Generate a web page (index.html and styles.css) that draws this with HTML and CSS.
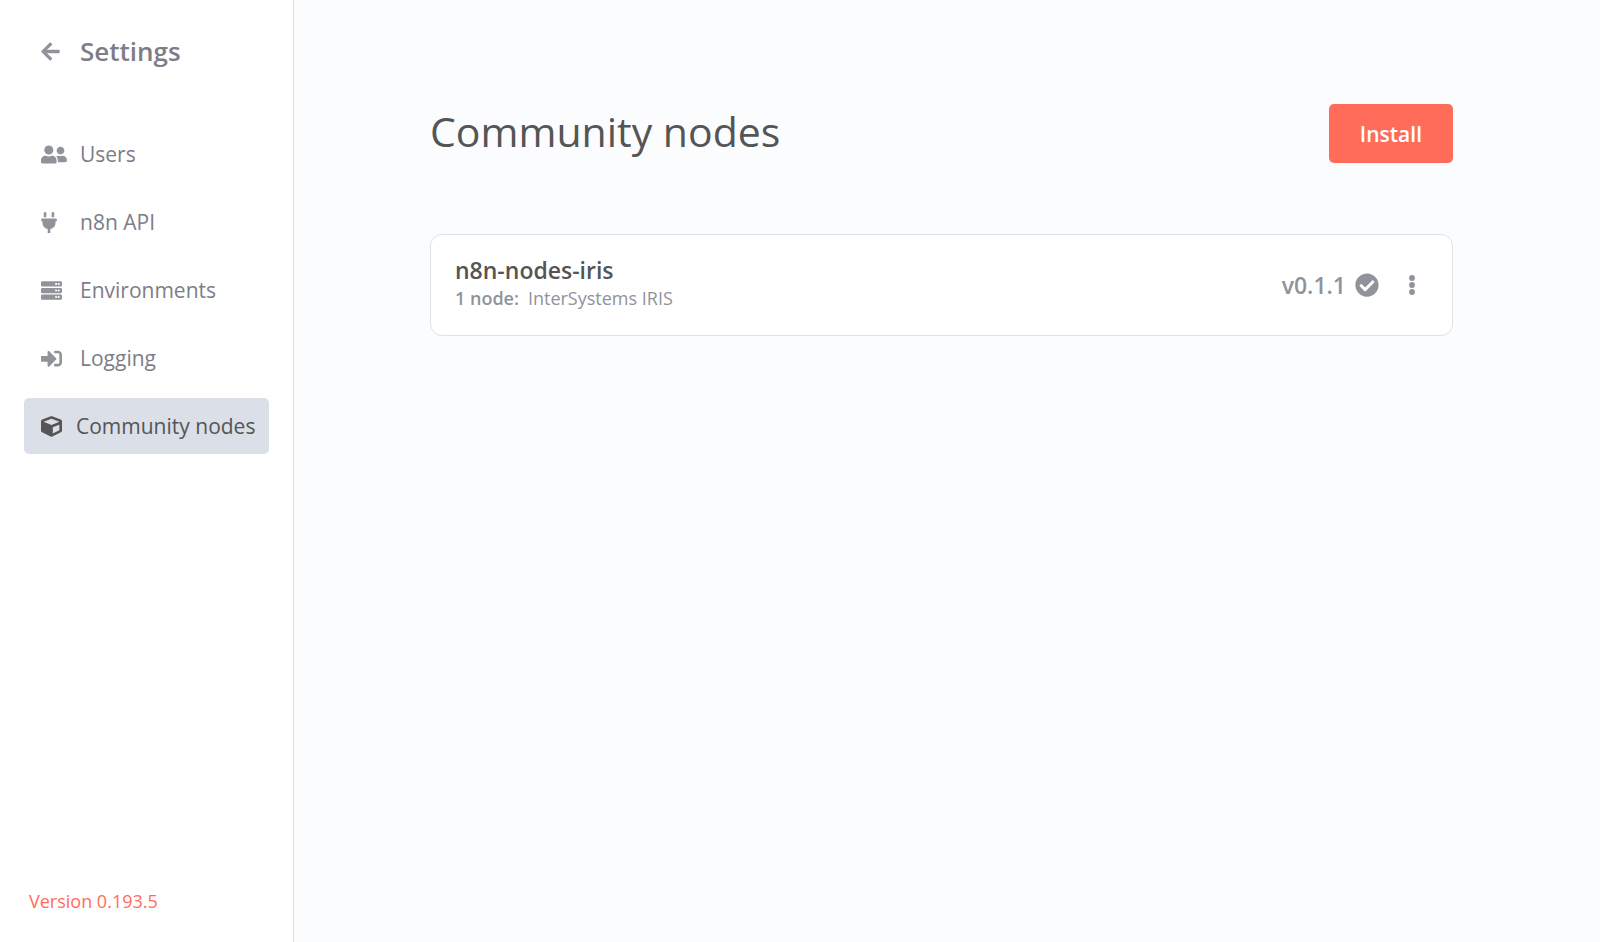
FILE: index.html
```html
<!DOCTYPE html>
<html lang="en">
<head>
    <meta charset="UTF-8">
    <meta name="viewport" content="width=device-width, initial-scale=1.0">
    <title>Settings - Community nodes</title>
    <link rel="stylesheet" href="styles.css">
</head>
<body>
    <div class="layout">
        <aside class="sidebar">
            <a href="#" class="sidebar-header">
                <span class="icon-box">
                    <svg class="icon icon-back" viewBox="0 0 448 512"><path d="M257.500 445.100l-22.200 22.200c-9.400 9.400-24.600 9.400-33.900 0L7 273c-9.400-9.400-9.400-24.600 0-33.900L201.400 44.700c9.400-9.400 24.600-9.400 33.900 0l22.200 22.200c9.500 9.500 9.300 25-.4 34.300L136.600 216H424c13.300 0 24 10.700 24 24v32c0 13.300-10.700 24-24 24H136.600l120.500 114.800c9.800 9.300 10 24.800.4 34.300z"/></svg>
                </span>
                <span class="sidebar-title">Settings</span>
            </a>

            <nav class="menu">
                <a href="#" class="menu-item">
                    <span class="icon-box">
                        <svg class="icon icon-users" viewBox="0 0 640 512"><path d="M192 256c61.900 0 112-50.100 112-112S253.900 32 192 32 80 82.100 80 144s50.100 112 112 112zm76.800 32h-8.300c-20.800 10-43.900 16-68.500 16s-47.600-6-68.500-16h-8.300C51.600 288 0 339.600 0 403.200V432c0 26.500 21.500 48 48 48h288c26.500 0 48-21.500 48-48v-28.800c0-63.600-51.600-115.200-115.200-115.200zM480 256c53 0 96-43 96-96s-43-96-96-96-96 43-96 96 43 96 96 96zm48 32h-3.800c-13.900 4.800-28.600 8-44.200 8s-30.300-3.200-44.200-8H432c-20.400 0-39.200 5.900-55.700 15.400 24.400 26.300 39.700 61.200 39.700 99.800v38.400c0 2.200-.5 4.300-.6 6.400H592c26.500 0 48-21.500 48-48 0-61.900-50.100-112-112-112z"/></svg>
                    </span>
                    <span>Users</span>
                </a>
                <a href="#" class="menu-item">
                    <span class="icon-box">
                        <svg class="icon icon-plug" viewBox="0 0 384 512"><path d="M320,32a32,32,0,0,0-64,0v96h64Zm48,128H16A16,16,0,0,0,0,176v32a16,16,0,0,0,16,16H32v32A160.070,160.070,0,0,0,160,412.800V512h64V412.800A160.070,160.070,0,0,0,352,256V224h16a16,16,0,0,0,16-16V176A16,16,0,0,0,368,160ZM128,32a32,32,0,0,0-64,0v96h64Z"/></svg>
                    </span>
                    <span>n8n API</span>
                </a>
                <a href="#" class="menu-item">
                    <span class="icon-box">
                        <svg class="icon" viewBox="0 0 512 512">
                            <path d="M480 160H32c-17.673 0-32-14.327-32-32V64c0-17.673 14.327-32 32-32h448c17.673 0 32 14.327 32 32v64c0 17.673-14.327 32-32 32zm-48-88c-13.255 0-24 10.745-24 24s10.745 24 24 24 24-10.745 24-24-10.745-24-24-24zm-64 0c-13.255 0-24 10.745-24 24s10.745 24 24 24 24-10.745 24-24-10.745-24-24-24z"/>
                            <path d="M480 320H32c-17.673 0-32-14.327-32-32v-64c0-17.673 14.327-32 32-32h448c17.673 0 32 14.327 32 32v64c0 17.673-14.327 32-32 32zm-48-88c-13.255 0-24 10.745-24 24s10.745 24 24 24 24-10.745 24-24-10.745-24-24-24zm-64 0c-13.255 0-24 10.745-24 24s10.745 24 24 24 24-10.745 24-24-10.745-24-24-24z"/>
                            <path d="M480 480H32c-17.673 0-32-14.327-32-32v-64c0-17.673 14.327-32 32-32h448c17.673 0 32 14.327 32 32v64c0 17.673-14.327 32-32 32zm-48-88c-13.255 0-24 10.745-24 24s10.745 24 24 24 24-10.745 24-24-10.745-24-24-24zm-64 0c-13.255 0-24 10.745-24 24s10.745 24 24 24 24-10.745 24-24-10.745-24-24-24z"/>
                        </svg>
                    </span>
                    <span>Environments</span>
                </a>
                <a href="#" class="menu-item">
                    <span class="icon-box">
                        <svg class="icon" viewBox="0 0 512 512"><path d="M416 448h-84c-6.600 0-12-5.400-12-12v-40c0-6.600 5.400-12 12-12h84c17.700 0 32-14.300 32-32V160c0-17.700-14.300-32-32-32h-84c-6.600 0-12-5.400-12-12V76c0-6.600 5.400-12 12-12h84c53 0 96 43 96 96v192c0 53-43 96-96 96zm-47-201L201 79c-15-15-41-4.500-41 17v96H24c-13.300 0-24 10.700-24 24v96c0 13.300 10.700 24 24 24h136v96c0 21.500 26 32 41 17l168-168c9.300-9.400 9.300-24.600 0-34z"/></svg>
                    </span>
                    <span>Logging</span>
                </a>
                <a href="#" class="menu-item active">
                    <span class="icon-box">
                        <svg class="icon" viewBox="0 0 512 512"><path d="M239.100 6.300l-208 78c-18.700 7-31.100 25-31.100 45v225.100c0 18.200 10.300 34.800 26.500 42.900l208 104c13.500 6.800 29.400 6.800 42.900 0l208-104c16.300-8.100 26.500-24.800 26.500-42.900V129.300c0-20-12.400-37.900-31.100-44.900l-208-78C262 2.200 250 2.200 239.100 6.300zM256 68.400l192 72v1.100l-192 78-192-78v-1.100l192-72zm32 356V275.500l160-65v133.900l-160 80z"/></svg>
                    </span>
                    <span>Community nodes</span>
                </a>
            </nav>

            <a href="#" class="version">Version 0.193.5</a>
        </aside>

        <main class="content">
            <div class="page-header">
                <h1>Community nodes</h1>
                <button type="button" class="install-button">Install</button>
            </div>

            <div class="package-card">
                <div class="package-info">
                    <h2 class="package-name">n8n-nodes-iris</h2>
                    <p class="package-nodes"><strong>1 node:</strong> <span>InterSystems IRIS</span></p>
                </div>
                <div class="package-status">
                    <span class="package-version">v0.1.1</span>
                    <svg class="icon icon-check" viewBox="0 0 512 512"><path d="M504 256c0 136.967-111.033 248-248 248S8 392.967 8 256 119.033 8 256 8s248 111.033 248 248zM227.314 387.314l184-184c6.248-6.248 6.248-16.379 0-22.627l-22.627-22.627c-6.248-6.249-16.379-6.249-22.628 0L216 308.118l-70.059-70.059c-6.248-6.248-16.379-6.248-22.628 0l-22.627 22.627c-6.248 6.248-6.248 16.379 0 22.627l104 104c6.249 6.249 16.379 6.249 22.628.001z"/></svg>
                    <button type="button" class="more-button" aria-label="More actions">
                        <svg class="icon icon-more" viewBox="0 0 6 20"><circle cx="3" cy="3" r="2.900"/><circle cx="3" cy="10" r="2.900"/><circle cx="3" cy="17" r="2.900"/></svg>
                    </button>
                </div>
            </div>
        </main>
    </div>
</body>
</html>
```

FILE: styles.css
```css
* {
    box-sizing: border-box;
    margin: 0;
    padding: 0;
}

body {
    font-family: "Open Sans", "Noto Sans", sans-serif;
    font-size: 21px;
    background: #fbfcfe;
    color: #555;
}

a {
    text-decoration: none;
}

button {
    font-family: inherit;
    border: none;
    cursor: pointer;
}

.layout {
    display: flex;
    min-height: 100vh;
}

/* Sidebar */
.sidebar {
    display: flex;
    flex-direction: column;
    flex-shrink: 0;
    width: 294px;
    padding: 31px 24px 24px;
    background: #fff;
    border-right: 1px solid #dbdfe7;
}

.sidebar-header {
    display: flex;
    align-items: center;
    height: 40px;
    padding: 0 17px;
    color: #7d7d87;
}

.sidebar-title {
    font-size: 26px;
    font-weight: 600;
}

.icon-box {
    display: flex;
    flex-shrink: 0;
    width: 39px;
}

.icon {
    display: block;
    width: 21px;
    height: 21px;
    fill: #909399;
}

.icon-back {
    width: 19px;
}

.icon-users {
    width: 26px;
}

.icon-plug {
    width: 16px;
}

.menu {
    display: flex;
    flex-direction: column;
    gap: 12px;
    margin-top: 55px;
}

.menu-item {
    display: flex;
    align-items: center;
    height: 56px;
    padding: 0 17px;
    border-radius: 5px;
    color: #7d7d87;
    white-space: nowrap;
}

.menu-item.active {
    background: #dbdfe7;
    color: #555;
}

.menu-item.active .icon-box {
    width: 35px;
}

.menu-item.active .icon {
    fill: #555;
}

.version {
    margin-top: auto;
    padding: 0 5px;
    font-size: 18px;
    line-height: 34px;
    color: #ff6d5a;
}

/* Main content */
.content {
    flex: 1;
    padding: 104px 147px 40px 136px;
}

.page-header {
    display: flex;
    justify-content: space-between;
    align-items: flex-start;
    margin-bottom: 71px;
}

.page-header h1 {
    font-size: 41px;
    font-weight: 400;
    line-height: 54px;
}

.install-button {
    height: 59px;
    padding: 0 31px;
    background: #ff6d5a;
    border-radius: 5px;
    color: #fff;
    font-size: 21px;
    font-weight: 600;
}

.package-card {
    display: flex;
    justify-content: space-between;
    align-items: center;
    padding: 19px 24px 24px;
    background: #fff;
    border: 1px solid #dfe1e5;
    border-radius: 12px;
}

.package-name {
    font-size: 23px;
    font-weight: 600;
    line-height: 32px;
}

.package-nodes {
    display: flex;
    gap: 9px;
    font-size: 18px;
    line-height: 25px;
    color: #909399;
}

.package-nodes strong {
    font-weight: 600;
}

.package-status {
    display: flex;
    align-items: center;
    padding: 4px 7px 0 0;
    color: #909399;
}

.package-version {
    font-size: 23px;
    font-weight: 600;
}

.icon-check {
    width: 24px;
    height: 24px;
    margin-left: 9px;
}

.more-button {
    display: flex;
    margin-left: 24px;
    padding: 6px;
    background: none;
}

.icon-more {
    width: 6px;
    height: 20px;
}
```
